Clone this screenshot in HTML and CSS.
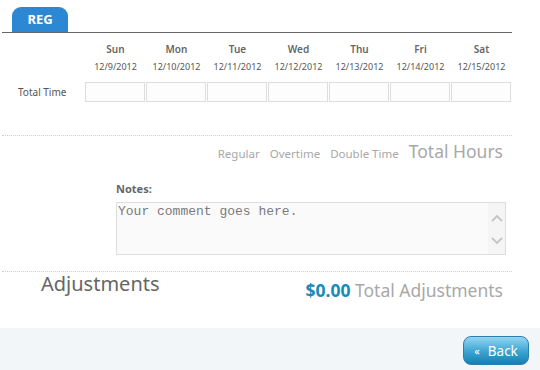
FILE: index.html
```html
<!DOCTYPE html>
<html lang="en">
<head>
  <meta charset="UTF-8">
  <title>Timesheet - REG</title>
  <link rel="stylesheet" href="styles.css">
</head>
<body>
  <div class="sheet">
    <div class="tabs">
      <div class="tab active">REG</div>
    </div>

    <div class="week">
      <div class="corner"></div>
      <div class="day"><span class="day-name">Sun</span><span class="day-date">12/9/2012</span></div>
      <div class="day"><span class="day-name">Mon</span><span class="day-date">12/10/2012</span></div>
      <div class="day"><span class="day-name">Tue</span><span class="day-date">12/11/2012</span></div>
      <div class="day"><span class="day-name">Wed</span><span class="day-date">12/12/2012</span></div>
      <div class="day"><span class="day-name">Thu</span><span class="day-date">12/13/2012</span></div>
      <div class="day"><span class="day-name">Fri</span><span class="day-date">12/14/2012</span></div>
      <div class="day"><span class="day-name">Sat</span><span class="day-date">12/15/2012</span></div>

      <div class="row-label">Total Time</div>
      <div class="cell"><input type="text" class="time-input"></div>
      <div class="cell"><input type="text" class="time-input"></div>
      <div class="cell"><input type="text" class="time-input"></div>
      <div class="cell"><input type="text" class="time-input"></div>
      <div class="cell"><input type="text" class="time-input"></div>
      <div class="cell"><input type="text" class="time-input"></div>
      <div class="cell"><input type="text" class="time-input"></div>
    </div>

    <div class="hours">
      <span class="hours-item">Regular</span>
      <span class="hours-item">Overtime</span>
      <span class="hours-item">Double Time</span>
      <span class="hours-total">Total Hours</span>
    </div>

    <div class="notes">
      <label class="notes-label" for="notes">Notes:</label>
      <div class="notes-box">
        <textarea id="notes" placeholder="Your comment goes here."></textarea>
        <div class="fake-scroll">
          <svg width="12" height="8" viewBox="0 0 12 8"><path d="M1 7 L6 2 L11 7" fill="none" stroke="#c4c4c4" stroke-width="1.8"/></svg>
          <svg width="12" height="8" viewBox="0 0 12 8"><path d="M1 1 L6 6 L11 1" fill="none" stroke="#c4c4c4" stroke-width="1.8"/></svg>
        </div>
      </div>
    </div>

    <div class="adjustments">
      <h2 class="adj-title">Adjustments</h2>
      <div class="adj-total"><span class="amount">$0.00</span> Total Adjustments</div>
    </div>
  </div>

  <div class="footer">
    <button class="btn-back"><span class="back-arrow">&laquo;</span> Back</button>
  </div>
</body>
</html>
```

FILE: styles.css
```css
:root {
  --text: #666666;
  --text-light: #a8a8a8;
  --blue: #2d88d4;
  --teal: #1a8ab8;
  --border: #dddddd;
}

* {
  margin: 0;
  padding: 0;
  box-sizing: border-box;
  font-family: "Noto Sans", "Open Sans", sans-serif;
}

body {
  width: 540px;
  background: #ffffff;
  color: var(--text);
}

.sheet {
  width: 512px;
  padding-left: 2px;
  padding-top: 7px;
}

.tabs {
  display: flex;
  border-bottom: 1px solid #666;
  padding-left: 10px;
}
.tab {
  width: 56px;
  height: 25px;
  background: var(--blue);
  color: #fff;
  font-size: 13px;
  font-weight: 700;
  text-align: center;
  line-height: 25px;
  border-radius: 9px 9px 0 0;
}

.week {
  display: grid;
  grid-template-columns: 83px repeat(7, 61px);
  padding-top: 9px;
}
.day {
  display: flex;
  flex-direction: column;
  align-items: center;
  gap: 4px;
  padding-bottom: 9px;
}
.day-name {
  font-size: 10px;
  font-weight: 600;
  line-height: 14px;
}
.day-date {
  font-size: 9px;
  color: #555;
  line-height: 13px;
}
.row-label {
  font-size: 10px;
  color: #555;
  padding-left: 16px;
  display: flex;
  align-items: center;
}
.cell {
  padding-right: 1px;
}
.time-input {
  display: block;
  width: 100%;
  height: 20px;
  border: 1px solid var(--border);
  background: #fdfdfd;
  outline: none;
}

.hours {
  margin-top: 33px;
  border-top: 1px dotted #cfcfcf;
  display: flex;
  justify-content: flex-end;
  align-items: baseline;
  gap: 10px;
  padding: 3px 9px 0 0;
  color: var(--text-light);
}
.hours-item {
  font-size: 11.5px;
}
.hours-total {
  font-size: 17.5px;
}

.notes {
  padding: 18px 0 0 114px;
}
.notes-label {
  display: block;
  font-size: 11px;
  font-weight: 700;
  margin-bottom: 6px;
}
.notes-box {
  position: relative;
  width: 390px;
  height: 53px;
}
.notes-box textarea {
  display: block;
  width: 100%;
  height: 100%;
  border: 1px solid var(--border);
  background: #fafafa;
  resize: none;
  outline: none;
  padding: 1px 18px 0 1px;
  font-family: "Liberation Mono", monospace;
  font-size: 13px;
  color: #777;
}
.notes-box textarea::placeholder {
  color: #7a7a7a;
}
.fake-scroll {
  position: absolute;
  top: 1px;
  right: 1px;
  bottom: 1px;
  width: 17px;
  background: #f5f5f5;
  display: flex;
  flex-direction: column;
  justify-content: space-between;
  align-items: center;
  padding: 11px 0 9px;
}

.adjustments {
  margin-top: 16px;
  border-top: 1px dotted #cfcfcf;
  display: flex;
  justify-content: space-between;
  align-items: flex-start;
  padding: 0 9px 0 39px;
  height: 57px;
}
.adj-title {
  font-size: 20px;
  font-weight: 400;
  color: var(--text);
  line-height: 24px;
}
.adj-total {
  font-size: 17.5px;
  color: var(--text-light);
  padding-top: 6px;
  line-height: 24px;
}
.amount {
  color: var(--teal);
  font-weight: 700;
}

.footer {
  height: 43px;
  background: #f3f6f9;
  display: flex;
  justify-content: flex-end;
  align-items: flex-start;
  padding: 8px 11px 0 0;
}
.btn-back {
  width: 66px;
  height: 29px;
  border: 1px solid #2a7fae;
  border-radius: 8px;
  background: linear-gradient(#94d6f2, #3aa3d0 55%, #1581b2);
  color: #fff;
  font-size: 13.5px;
  display: flex;
  align-items: center;
  justify-content: center;
  gap: 8px;
  cursor: pointer;
}
.back-arrow {
  font-size: 11px;
}
```
